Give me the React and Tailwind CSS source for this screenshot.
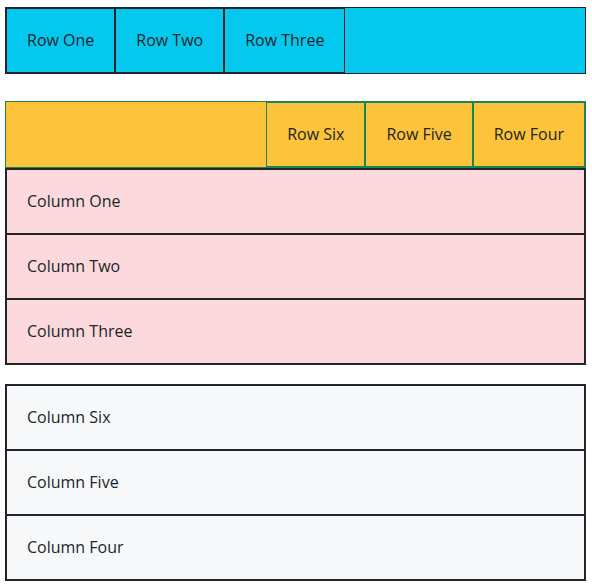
import React from "react";

const rowItems = ["Row One", "Row Two", "Row Three"];
const rowReverseItems = ["Row Four", "Row Five", "Row Six"];
const columnItems = ["Column One", "Column Two", "Column Three"];
const columnReverseItems = ["Column Four", "Column Five", "Column Six"];

const App = () => {
  return (
    <div
      className="min-h-screen bg-white pt-[7px] pl-[5px] text-[#212529] text-[16px] leading-[23px]"
      style={{ fontFamily: '"Open Sans", "Noto Sans", sans-serif' }}
    >
      <div className="w-[581px]">
        {/* flex-row */}
        <div className="flex flex-row border border-[#212529] bg-[#04c8ee]">
          {rowItems.map((item) => (
            <div key={item} className="px-5 py-5 border border-[#212529]">
              {item}
            </div>
          ))}
        </div>

        {/* flex-row-reverse */}
        <div className="mt-[27px] flex flex-row-reverse border border-[#198754] bg-[#fdc33a]">
          {rowReverseItems.map((item) => (
            <div key={item} className="px-5 py-5 border border-[#198754]">
              {item}
            </div>
          ))}
        </div>

        {/* flex-col */}
        <div className="flex flex-col border border-[#212529] bg-[#fbd9dc]">
          {columnItems.map((item) => (
            <div key={item} className="px-5 py-5 border border-[#212529]">
              {item}
            </div>
          ))}
        </div>

        {/* flex-col-reverse */}
        <div className="mt-[19px] flex flex-col-reverse border border-[#212529] bg-[#f7f8fa]">
          {columnReverseItems.map((item) => (
            <div key={item} className="px-5 py-5 border border-[#212529]">
              {item}
            </div>
          ))}
        </div>
      </div>
    </div>
  );
};

export default App;
